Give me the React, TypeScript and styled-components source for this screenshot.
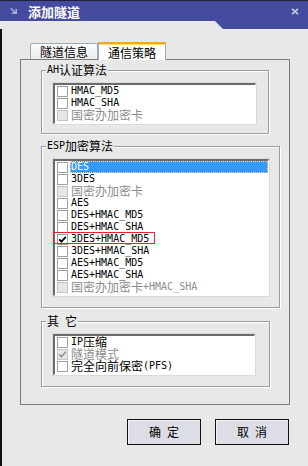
import React from 'react'
import styled, { createGlobalStyle } from 'styled-components'

const GlobalStyle = createGlobalStyle`
  html, body {
    margin: 0;
    padding: 0;
    background: #e8e8e8;
  }
  body {
    font-family: "Noto Sans CJK SC", "DejaVu Sans", sans-serif;
  }
`

interface Item {
  t: string
  disabled?: boolean
  checked?: boolean
  selected?: boolean
  marked?: boolean
}

const ahItems: Item[] = [
  { t: 'HMAC_MD5' },
  { t: 'HMAC_SHA' },
  { t: '国密办加密卡', disabled: true }
]

const espItems: Item[] = [
  { t: 'DES', selected: true },
  { t: '3DES' },
  { t: '国密办加密卡', disabled: true },
  { t: 'AES' },
  { t: 'DES+HMAC_MD5' },
  { t: 'DES+HMAC_SHA' },
  { t: '3DES+HMAC_MD5', checked: true, marked: true },
  { t: '3DES+HMAC_SHA' },
  { t: 'AES+HMAC_MD5' },
  { t: 'AES+HMAC_SHA' },
  { t: '国密办加密卡+HMAC_SHA', disabled: true }
]

const otherItems: Item[] = [
  { t: 'IP压缩' },
  { t: '隧道模式', disabled: true, checked: true },
  { t: '完全向前保密(PFS)' }
]

const Window = styled.div`
  width: 308px;
  height: 466px;
  display: flex;
  flex-direction: column;
  background: #e8e8e8;
  overflow: hidden;
  font-size: 12px;
  color: #000;
`

const TitleBar = styled.div`
  flex: none;
  height: 29px;
  box-sizing: border-box;
  border-top: 1px solid #1e2036;
  background: #444b9e;
  clip-path: polygon(0 0, 100% 0, 100% 29px, 223px 29px, 215px 21px, 0 21px);
`

const TitleRow = styled.div`
  display: flex;
  align-items: center;
  gap: 11px;
  height: 20px;
  padding: 0 9px 0 10px;
`

const Title = styled.span`
  color: #fff;
  font-weight: 700;
  font-size: 13px;
  line-height: 1;
`

const CloseIcon = styled.svg`
  margin-left: auto;
`

const Content = styled.div`
  flex: 1;
  display: flex;
  flex-direction: column;
  box-sizing: border-box;
  border-left: 2px solid #111;
  padding: 13px 18px 0 18px;
`

const TabRow = styled.div`
  display: flex;
  align-items: flex-end;
  height: 18px;
  padding-left: 10px;
  margin-bottom: -1px;
  position: relative;
  z-index: 1;
`

const Tab = styled.div<{ $active?: boolean }>`
  box-sizing: border-box;
  width: 68px;
  display: flex;
  align-items: center;
  justify-content: center;
  font-size: 12px;
  line-height: 12px;
  border: 1px solid #9aabb6;
  border-bottom: none;
  height: ${(p) => (p.$active ? '18px' : '16px')};
  margin-bottom: ${(p) => (p.$active ? '0' : '1px')};
  border-radius: ${(p) => (p.$active ? '0' : '3px 0 0 0')};
  background: ${(p) =>
    p.$active ? '#fff' : 'linear-gradient(#fdfdfd, #ebebeb)'};
  border-top: ${(p) => (p.$active ? '2px solid #f3a526' : '1px solid #9aabb6')};
  box-shadow: ${(p) => (p.$active ? 'inset 0 1px 0 #ffd77e' : 'none')};
  padding-top: ${(p) => (p.$active ? '1px' : '0')};
`

const Panel = styled.div`
  border: 1px solid #7b7b7b;
  padding: 10px 0 17px 20px;
  display: flex;
  flex-direction: column;
`

const Group = styled.div<{ $w: number; $gap: number }>`
  box-sizing: border-box;
  width: ${(p) => p.$w}px;
  margin-top: ${(p) => p.$gap}px;
  border: 1px solid #9c9c9c;
  box-shadow: 1px 1px 0 #fff, inset 1px 1px 0 #fff;
  padding: 0 0 ${(p) => (p.$gap > 10 ? 11 : 9)}px 11px;
  display: flex;
  flex-direction: column;
  align-items: flex-start;
`

const Caption = styled.div`
  display: flex;
  align-items: center;
  height: 12px;
  margin: -7px 0 0 -7px;
  padding: 0 1px;
  background: #e8e8e8;
  font-size: 12px;
  line-height: 12px;
`

const ListBox = styled.div<{ $w: number }>`
  box-sizing: border-box;
  width: ${(p) => p.$w}px;
  margin-top: 7px;
  background: #fff;
  border-top: 2px solid #6b6b6b;
  border-left: 2px solid #6b6b6b;
  border-right: 1px solid #fff;
  border-bottom: 1px solid #fff;
  outline: 1px solid #dadada;
  padding-bottom: 2px;
  display: flex;
  flex-direction: column;
`

const Row = styled.div<{ $marked?: boolean }>`
  display: flex;
  align-items: center;
  gap: 2px;
  height: 12px;
  padding-left: 2px;
  position: relative;
  align-self: ${(p) => (p.$marked ? 'flex-start' : 'stretch')};
  padding-right: ${(p) => (p.$marked ? '6px' : '0')};

  ${(p) =>
    p.$marked &&
    `
    &::after {
      content: '';
      position: absolute;
      left: -2px;
      top: -1px;
      right: 0;
      bottom: 1px;
      border: 1px solid #e3242b;
    }
  `}
`

const Check = styled.span<{ $disabled?: boolean }>`
  flex: none;
  box-sizing: border-box;
  width: 11px;
  height: 11px;
  border: 1px solid ${(p) => (p.$disabled ? '#c4c4c4' : '#a0a0a0')};
  background: ${(p) => (p.$disabled ? '#e6e6e6' : '#fff')};
  display: flex;
  align-items: center;
  justify-content: center;
`

const Label = styled.span<{ $disabled?: boolean; $selected?: boolean }>`
  display: flex;
  align-items: center;
  height: 12px;
  padding-left: 1px;
  white-space: nowrap;
  font-size: 12px;
  line-height: 12px;
  color: ${(p) => (p.$selected ? '#fff' : p.$disabled ? '#8c8c8c' : '#000')};
  background: ${(p) => (p.$selected ? '#3399ff' : 'transparent')};
  flex: ${(p) => (p.$selected ? '1' : 'none')};
  outline: ${(p) => (p.$selected ? '1px dotted #ffd98a' : 'none')};
  outline-offset: -1px;
`

const Latin = styled.span`
  font-family: "DejaVu Sans Mono", "Liberation Mono", monospace;
  font-size: 10px;
  line-height: 12px;
  white-space: pre;
`

const Cjk = styled.span`
  font-family: "Noto Sans CJK SC", sans-serif;
  font-size: 12px;
  line-height: 12px;
`

const ButtonRow = styled.div`
  display: flex;
  justify-content: flex-end;
  gap: 14px;
  margin-top: 14px;
  margin-right: 1px;
`

const Button = styled.button`
  box-sizing: border-box;
  width: 74px;
  height: 26px;
  padding: 0;
  border: 1px solid #111;
  background: #dcdde5;
  box-shadow: inset 1px 1px 0 #f3f3f7;
  display: flex;
  align-items: center;
  justify-content: center;
  font-size: 12px;
  color: #000;
`

const Mixed: React.FC<{ text: string }> = ({ text }) => (
  <>
    {(text.match(/[\x20-\x7e]+|[^\x20-\x7e]+/g) || []).map((s, i) =>
      /^[\x20-\x7e]/.test(s) ? (
        <Latin key={i}>{s}</Latin>
      ) : (
        <Cjk key={i}>{s}</Cjk>
      )
    )}
  </>
)

const CheckMark: React.FC<{ color: string }> = ({ color }) => (
  <svg width="9" height="9" viewBox="0 0 9 9">
    <polyline
      points="1.2,4.3 3.4,6.7 7.8,1.8"
      fill="none"
      stroke={color}
      strokeWidth="1.8"
    />
  </svg>
)

const List: React.FC<{ items: Item[]; width: number }> = ({ items, width }) => (
  <ListBox $w={width}>
    {items.map((it) => (
      <Row key={it.t} $marked={it.marked}>
        <Check $disabled={it.disabled}>
          {it.checked && <CheckMark color={it.disabled ? '#9a9a9a' : '#000'} />}
        </Check>
        <Label $disabled={it.disabled} $selected={it.selected}>
          <Mixed text={it.t} />
        </Label>
      </Row>
    ))}
  </ListBox>
)

export default function App() {
  return (
    <Window>
      <GlobalStyle />
      <TitleBar>
        <TitleRow>
          <svg width="7" height="8" viewBox="0 0 7 8">
            <path
              d="M0.8 1.2 L5.6 6 M1.8 6.3 H6.2 V2"
              fill="none"
              stroke="#a9abd2"
              strokeWidth="1.6"
            />
          </svg>
          <Title>添加隧道</Title>
          <CloseIcon width="8" height="7" viewBox="0 0 8 7">
            <path
              d="M1 0.8 L7 6.2 M7 0.8 L1 6.2"
              stroke="#bfc2e0"
              strokeWidth="1.8"
            />
          </CloseIcon>
        </TitleRow>
      </TitleBar>
      <Content>
        <TabRow>
          <Tab>隧道信息</Tab>
          <Tab $active>通信策略</Tab>
        </TabRow>
        <Panel>
          <Group $w={228} $gap={0}>
            <Caption>
              <Mixed text="AH认证算法" />
            </Caption>
            <List items={ahItems} width={203} />
          </Group>
          <Group $w={239} $gap={12}>
            <Caption>
              <Mixed text="ESP加密算法" />
            </Caption>
            <List items={espItems} width={216} />
          </Group>
          <Group $w={229} $gap={13}>
            <Caption>
              <Mixed text="其 它" />
            </Caption>
            <List items={otherItems} width={202} />
          </Group>
        </Panel>
        <ButtonRow>
          <Button>
            <Mixed text="确 定" />
          </Button>
          <Button>
            <Mixed text="取 消" />
          </Button>
        </ButtonRow>
      </Content>
    </Window>
  )
}
